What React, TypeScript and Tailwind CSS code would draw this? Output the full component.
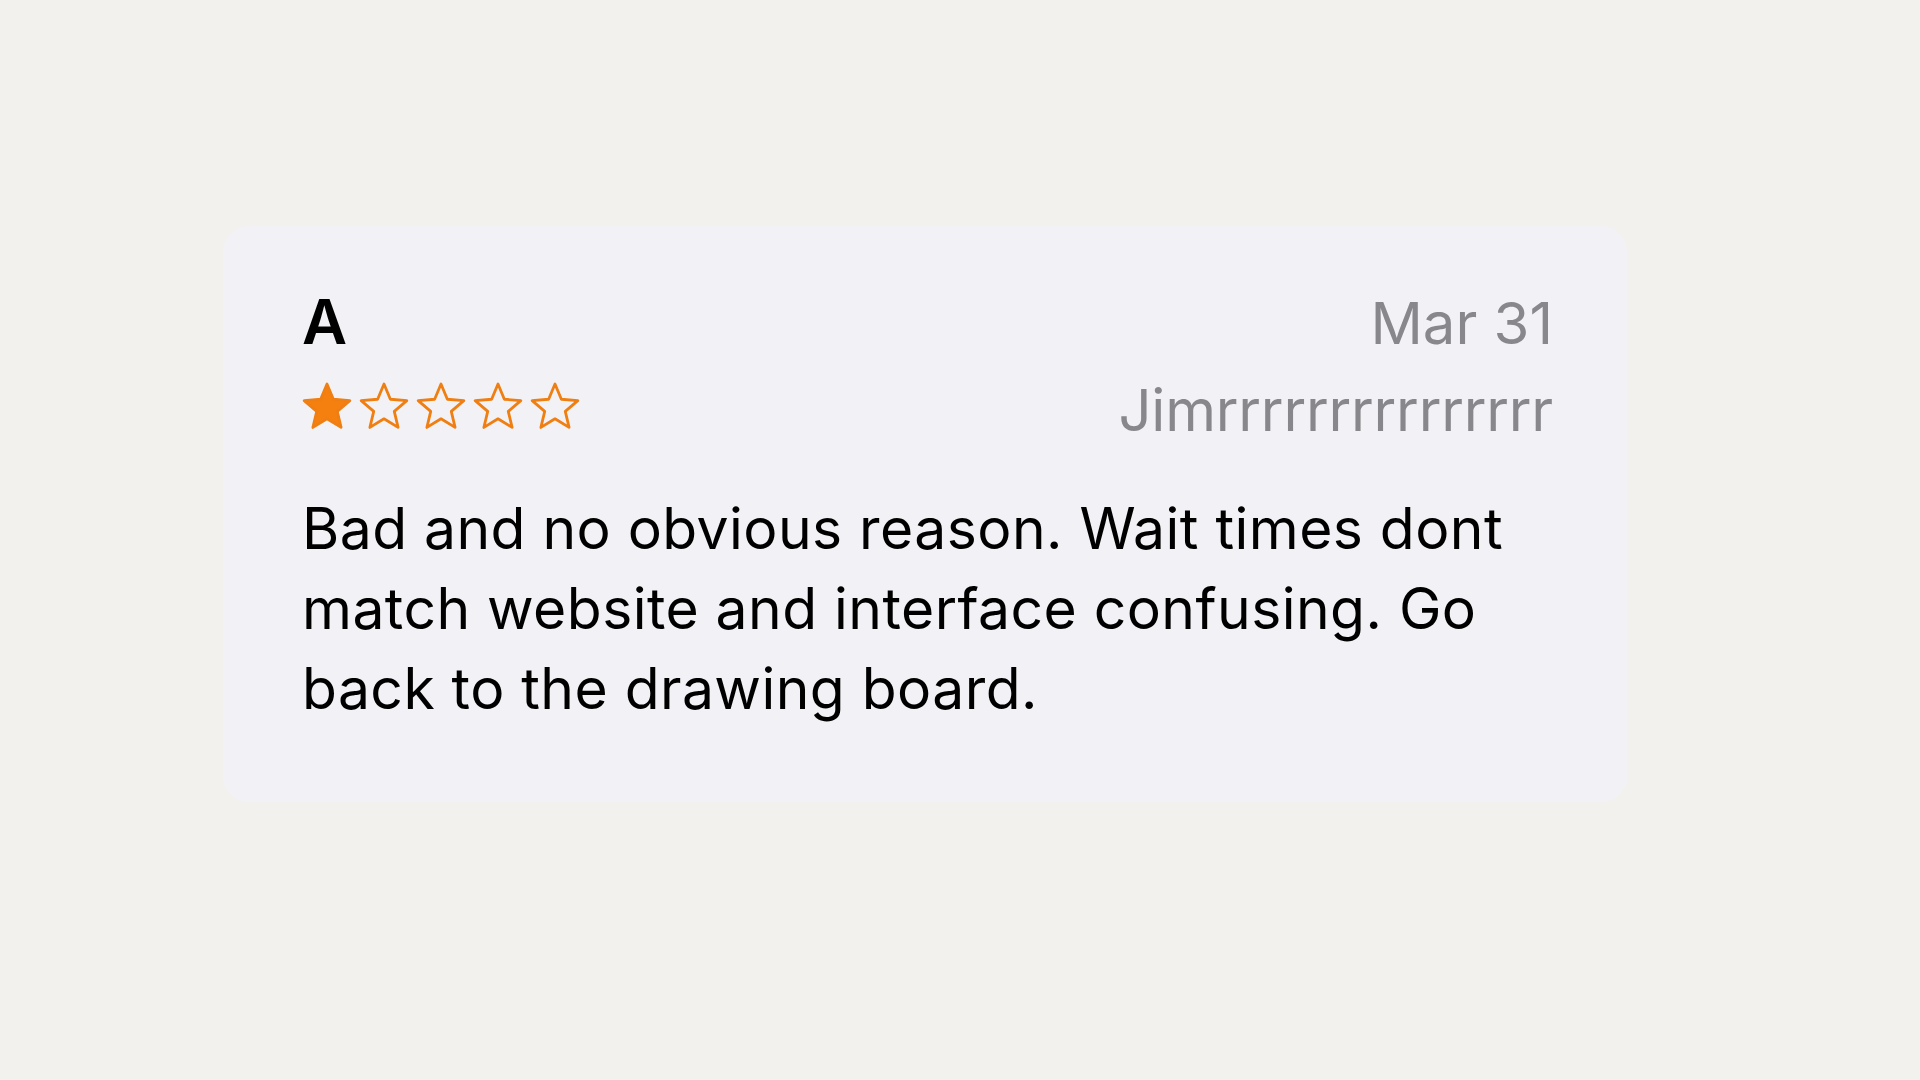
import React from "react";

const STAR_POINTS =
  "25,1 31.35,16.26 47.83,17.58 35.27,28.34 39.11,44.42 25,35.8 10.89,44.42 14.73,28.34 2.17,17.58 18.65,16.26";

function Star({ filled }: { filled: boolean }) {
  return (
    <svg width="50" height="46" viewBox="0 0 50 46" className="block overflow-visible">
      <polygon
        points={STAR_POINTS}
        fill={filled ? "#f5800f" : "none"}
        stroke="#ef7f12"
        strokeWidth={2.8}
        strokeLinejoin="round"
      />
    </svg>
  );
}

export default function App() {
  const rating = 1;
  return (
    <div
      className="min-h-screen w-full bg-[#f2f1ee] pt-[226px] pl-[223px]"
      style={{ fontFamily: "Inter, 'Liberation Sans', Arial, sans-serif" }}
    >
      <div className="w-[1404px] rounded-[26px] bg-[#f2f2f6] pl-[79px] pr-[74px] pt-[61px] pb-[73px]">
        <div className="flex items-baseline justify-between">
          <span className="text-[62px] font-semibold leading-[70px] text-black">A</span>
          <span className="text-[58px] leading-[70px] text-[#88888c]">Mar 31</span>
        </div>
        <div className="mt-[20px] flex items-start justify-between">
          <div className="mt-[5px] flex gap-[7px]">
            {[0, 1, 2, 3, 4].map((i) => (
              <Star key={i} filled={i < rating} />
            ))}
          </div>
          <span className="text-[58px] leading-[64px] tracking-[-0.2px] text-[#88888c]">Jimrrrrrrrrrrrrrrr</span>
        </div>
        <p className="mt-[47px] text-[57px] leading-[80px] tracking-[0.45px] text-black">
          Bad and no obvious reason. Wait times dont match website and interface confusing. Go back to the drawing board.
        </p>
      </div>
    </div>
  );
}
